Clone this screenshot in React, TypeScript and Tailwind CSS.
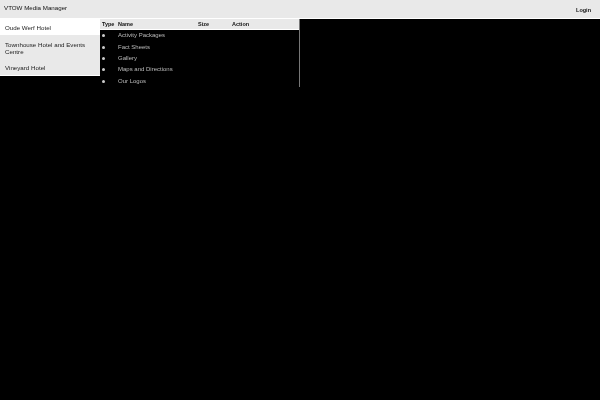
const rows = ['Activity Packages', 'Fact Sheets', 'Gallery', 'Maps and Directions', 'Our Logos'];

export default function App() {
  return (
    <div className="h-[400px] w-[600px] overflow-hidden bg-black font-['Liberation_Sans',sans-serif] blur-[0.3px]">
      {/* header */}
      <div className="flex h-[19px] items-start justify-between border-b border-white bg-[#e9e9e9] pl-[4px] pr-[9px]">
        <span className="mt-[3px] text-[6.2px] leading-[9px] text-[#111]">VTOW Media Manager</span>
        <button className="mt-[6px] text-[5.5px] leading-[8px] font-bold text-[#111]">Login</button>
      </div>

      <div className="flex items-start">
        {/* hotels */}
        <div className="flex w-[100px] flex-col border-b border-white bg-[#e9e9e9] text-[6.2px] leading-[7px] text-[#222]">
          <div className="h-[16px] bg-white px-[5px] pt-[5px]">Oude Werf Hotel</div>
          <div className="h-[24px] px-[5px] pt-[6px]">Townhouse Hotel and Events Centre</div>
          <div className="h-[16px] px-[5px] pt-[5px]">Vineyard Hotel</div>
        </div>

        {/* media table */}
        <div className="w-[200px] border-r border-[#777]">
          <div className="flex h-[11px] items-center border-b border-white bg-[#e9e9e9] pl-[2px] text-[5.5px] font-bold text-[#111]">
            <span className="w-[16px]">Type</span>
            <span className="w-[80px]">Name</span>
            <span className="w-[34px]">Size</span>
            <span>Action</span>
          </div>
          {rows.map((name) => (
            <div key={name} className="flex h-[11.4px] items-center pl-[2px] text-[6px] text-[#bbb]">
              <span className="w-[16px]">
                <span className="block h-[3px] w-[3px] rounded-full bg-[#ccc]" />
              </span>
              <span>{name}</span>
            </div>
          ))}
        </div>
      </div>
    </div>
  );
}
